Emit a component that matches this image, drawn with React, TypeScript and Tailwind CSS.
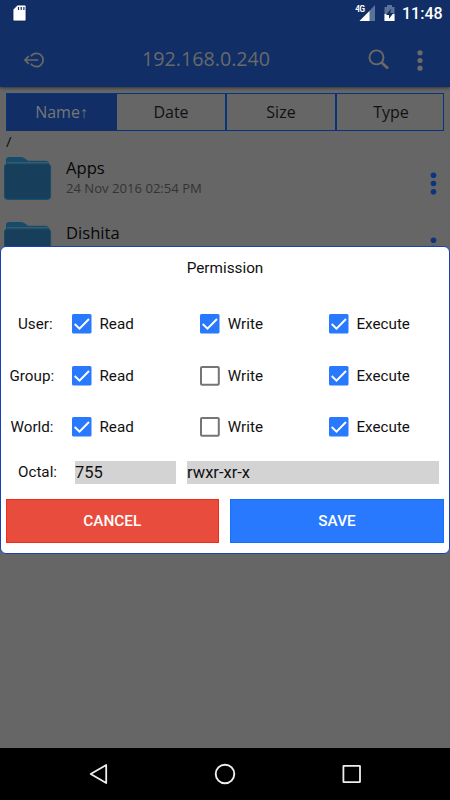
import React from "react";

function Check({ checked }: { checked: boolean }) {
  return (
    <svg className="block h-5 w-5 shrink-0" viewBox="0 0 20 20">
      {checked ? (
        <>
          <rect x="0" y="0" width="19.5" height="19.5" rx="1.5" fill="#2979ff" />
          <path d="M2.7 10 L7.5 14.6 L17 5" fill="none" stroke="#fff" strokeWidth="2" />
        </>
      ) : (
        <rect x="1" y="1" width="17.8" height="17.8" rx="1" fill="#fff" stroke="#757575" strokeWidth="2" />
      )}
    </svg>
  );
}

function Option({ label, checked }: { label: string; checked: boolean }) {
  return (
    <div className="flex items-center gap-[7.5px]">
      <Check checked={checked} />
      <span className="text-[15.2px] leading-5">{label}</span>
    </div>
  );
}

function PermissionRow({ label, pad, write }: { label: string; pad: string; write: boolean }) {
  return (
    <div className="grid h-[51.5px] grid-cols-[71px_128.3px_128.7px_1fr] items-center">
      <span className={"text-[15.2px] leading-5 " + pad}>{label}</span>
      <Option label="Read" checked />
      <Option label="Write" checked={write} />
      <Option label="Execute" checked />
    </div>
  );
}

function Folder() {
  return (
    <svg className="block h-[44px] w-12 shrink-0" viewBox="0 0 48 44">
      <path d="M2 7V3Q2 0 5 0H17Q19 0 21 1.5L24 3.8H41.5Q44.5 3.8 45 7V12H2Z" fill="#164b6b" />
      <path d="M3 5.9H44" stroke="#53646d" strokeWidth="1" />
      <rect x=".4" y="7.1" width="46.2" height="35.2" rx="3" fill="#173f5b" stroke="#154a6a" strokeWidth=".8" />
      <path d="M1 40.5Q2 42.2 4 42.2H43Q45.5 42.2 46 40.5" fill="none" stroke="#124f70" strokeWidth="1" />
    </svg>
  );
}

function FileRow({ name, date }: { name: string; date: string }) {
  return (
    <div className="flex h-[65.3px] pl-1">
      <Folder />
      <div className="ml-[14px] flex-1 font-['Open_Sans',sans-serif]">
        <div className="text-[16.6px] leading-[21px] text-[#080808]">{name}</div>
        <div className="text-[13.1px] leading-[20px] text-[#333]">{date}</div>
      </div>
      <svg className="mr-[11px] mt-[15px] h-6 w-[12px]" viewBox="0 0 12 24" fill="#0b357d">
        <circle cx="6.5" cy="3.3" r="2.8" />
        <circle cx="6.5" cy="11.5" r="2.8" />
        <circle cx="6.5" cy="19.7" r="2.8" />
      </svg>
    </div>
  );
}

function StatusBar() {
  return (
    <div className="flex h-7 items-start">
      <svg className="ml-3 mt-1 h-[18px] w-4" viewBox="0 0 16 18">
        <path d="M5.5 1H13Q14 1 14 2V16Q14 17 13 17H2Q1 17 1 16V5.5Z" fill="#fff" stroke="#091c55" strokeWidth=".8" />
        <path d="M6.5 3v3M9.2 3v3M11.9 3v3" stroke="#112f66" strokeWidth="1.2" />
      </svg>
      <div className="ml-auto mt-[4px] flex">
        <svg className="h-[18px] w-[22px] overflow-visible" viewBox="0 0 22 18">
          <path d="M19 1V17H3.5Z" fill="#5c7399" />
          <path d="M13.5 7V17H3.5Z" fill="#fff" />
          <text x="-.7" y="8.3" fill="#fff" fontSize="8.5" fontWeight="700" fontFamily="Roboto" textLength="9.7" stroke="#112f66" strokeWidth="1" paintOrder="stroke">4G</text>
        </svg>
        <svg className="ml-[5.5px] h-[18px] w-3" viewBox="0 0 12 18">
          <path d="M3 1H8V3H10.5V17H.5V3H3Z" fill="#5c7399" />
          <path d="M.5 10H10.5V17H.5Z" fill="#fff" />
          <path d="M7.2 4.5L2 11H5V14.8L9.5 9H6.3Z" fill="#112f66" />
        </svg>
      </div>
      <span className="ml-[6.5px] mr-[9px] mt-[4px] w-[39px] text-[16px] font-medium leading-5 text-white">11:48</span>
    </div>
  );
}

function Toolbar() {
  return (
    <div className="flex h-[59px] items-center">
      <svg className="ml-6 mt-[5px] h-4 w-5" viewBox="0 0 20 16" fill="none" stroke="#696969" strokeWidth="1.7">
        <path d="M6.9 4.2A6.7 6.7 0 1 1 6.9 11.8M14.3 8H1M4.8 4.2L1 8l3.8 3.8" />
      </svg>
      <div className="ml-[98px] mt-[2px] w-[134px] whitespace-nowrap font-['Open_Sans',sans-serif] text-[19.7px] leading-7 text-[#696969]">192.168.0.240</div>
      <svg className="ml-[92px] mt-[5px] h-6 w-6" viewBox="0 0 24 24" fill="none" stroke="#6b6a66">
        <circle cx="8.5" cy="9.4" r="7" strokeWidth="1.9" />
        <path d="M13.5 14.5l6.5 6" strokeWidth="2.7" />
      </svg>
      <svg className="ml-[22px] mt-[6px] h-6 w-4" viewBox="0 0 16 24" fill="#6b6a66">
        <circle cx="6" cy="3.8" r="2.6" />
        <circle cx="6" cy="11.5" r="2.6" />
        <circle cx="6" cy="19.2" r="2.6" />
      </svg>
    </div>
  );
}

export default function App() {
  return (
    <div className="relative flex h-[800px] w-[450px] flex-col overflow-hidden bg-[#666] font-['Roboto',sans-serif] text-[#111]">
      <header className="h-[87px] shrink-0 bg-[#112f66] shadow-[0_1px_3px_#333]">
        <StatusBar />
        <Toolbar />
      </header>
      <main className="flex-1">
        <div className="ml-[6px] mr-[6px] mt-[6px] grid h-[38px] grid-cols-[110px_110px_110px_106px] border border-[#04357e] text-center font-['Open_Sans',sans-serif] text-[16px] leading-[37px]">
          <div className="bg-[#112f66] pr-[2px] text-[#777]">Name<span className="inline-block w-[7px] text-[16px]">↑</span></div>
          <div className="border-r-2 border-[#04357e]">Date</div>
          <div className="border-r-2 border-[#04357e]">Size</div>
          <div className="pl-[2px]">Type</div>
        </div>
        <div className="h-[25.5px] pl-[6px] font-['Open_Sans',sans-serif] text-[15px] leading-[20px]">/</div>
        <FileRow name="Apps" date="24 Nov 2016 02:54 PM" />
        <FileRow name="Dishita" date="24 Nov 2016 02:54 PM" />
      </main>
      <nav className="flex h-[52px] items-center bg-black">
        <svg className="ml-[88px] h-6 w-6" viewBox="0 0 24 24" fill="none" stroke="#eee" strokeWidth="1.8" strokeLinejoin="round">
          <path d="M2.7 12L18.2 3V21Z" />
        </svg>
        <svg className="ml-[101px] h-6 w-6" viewBox="0 0 24 24" fill="none" stroke="#eee" strokeWidth="1.9">
          <circle cx="12" cy="12" r="9.3" />
        </svg>
        <svg className="ml-[103px] h-6 w-6" viewBox="0 0 24 24" fill="none" stroke="#eee" strokeWidth="1.8">
          <rect x="3.4" y="3.8" width="16.6" height="16.4" rx=".5" />
        </svg>
      </nav>
      <section className="absolute left-0 top-[246px] h-[308px] w-[450px] rounded-[6px] border border-[#1740b8] bg-white">
        <h2 className="pt-[11px] text-center text-[15.3px] leading-5">Permission</h2>
        <div className="pt-[20.5px]">
          <PermissionRow label="User:" pad="pl-[17px]" write />
          <PermissionRow label="Group:" pad="pl-[8.5px]" write={false} />
          <PermissionRow label="World:" pad="pl-[9.5px]" write={false} />
        </div>
        <div className="mt-[8px] flex h-[22.5px] items-center">
          <span className="w-[74px] pl-[17px] pt-px text-[15.2px]">Octal:</span>
          <span className="h-[22.5px] w-[101px] bg-[#d3d3d3] text-[16.5px] leading-[24px]">755</span>
          <span className="ml-[11px] h-[22.5px] w-[252px] bg-[#d3d3d3] text-[16.5px] leading-[24px]">rwxr-xr-x</span>
        </div>
        <div className="mt-[15px] flex gap-[11px] pl-[4.5px] text-[15.3px] font-medium text-white">
          <button className="h-11 w-[213.5px] border border-[#f02b18] bg-[#e84c3d] pt-[2px]">CANCEL</button>
          <button className="h-11 w-[214px] border border-[#1170ff] bg-[#2979ff] pt-[2px]">SAVE</button>
        </div>
      </section>
    </div>
  );
}
